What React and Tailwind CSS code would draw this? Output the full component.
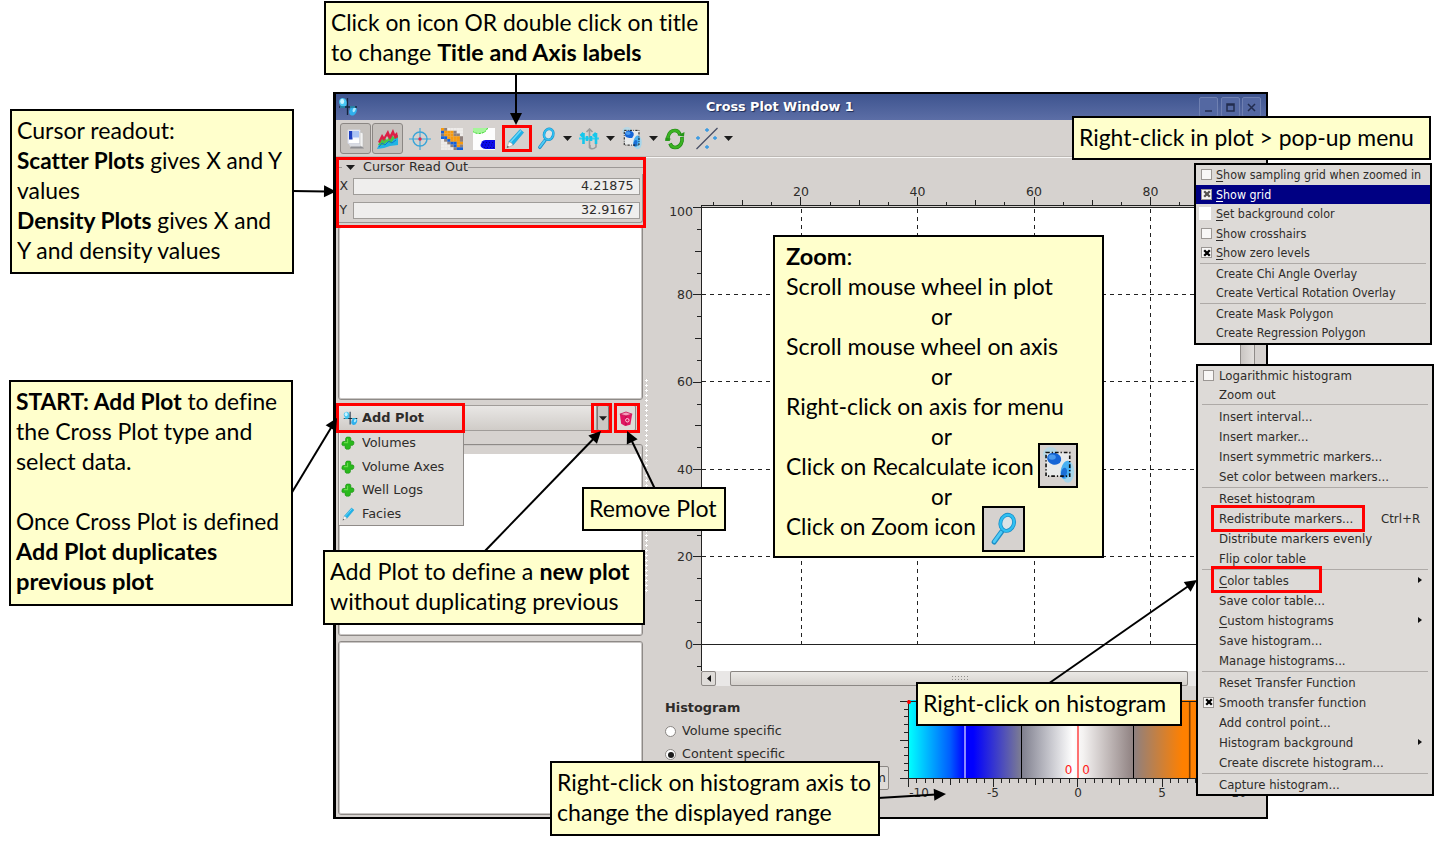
import React, { useLayoutEffect, useRef } from "react";

const UI = "font-['DejaVu_Sans',sans-serif] text-[#2e2c2a]";

/* Text stretched or squeezed horizontally to a fixed advance width. */
function Fit({ w, children, className = "" }) {
  const ref = useRef(null);
  useLayoutEffect(() => {
    const el = ref.current;
    if (el && w) el.style.transform = `scaleX(${w / el.offsetWidth})`;
  }, [w]);
  return (
    <span className="inline-block" style={{ width: w }}>
      <span ref={ref} className={`inline-block origin-left whitespace-nowrap ${className}`}>
        {children}
      </span>
    </span>
  );
}

function Callout({ className, lines, children }) {
  return (
    <div
      className={`absolute border-2 border-black bg-[#ffffcc] pt-[5px] pl-[5px] font-['Lato',sans-serif] text-[22.5px] leading-[30px] text-black [font-variant-ligatures:none] ${className}`}
    >
      {lines.map(([w, content, extra], i) => (
        <div key={i} className={`h-[30px] ${extra || ""}`}>
          {w ? <Fit w={w}>{content}</Fit> : null}
        </div>
      ))}
      {children}
    </div>
  );
}

function LogoIcon({ className }) {
  return (
    <svg viewBox="0 0 20 20" className={className}>
      <ellipse cx="5" cy="5.5" rx="3.8" ry="4.6" transform="rotate(-20 5 5.5)" fill="#46c6f2" />
      <ellipse cx="4.2" cy="4.4" rx="2" ry="2.6" fill="#c9f3ff" />
      <ellipse cx="15" cy="14" rx="3.6" ry="4.8" transform="rotate(25 15 14)" fill="#2fb0ec" />
      <ellipse cx="16.2" cy="12.6" rx="1.4" ry="2.6" transform="rotate(25 16 12.6)" fill="#aeeafd" />
      <path d="M9.5 1v17M1 10h18" stroke="#14263c" strokeWidth="1.3" />
      <path d="M2 10h5M12 10h5" stroke="#31c8ef" strokeWidth="1.1" />
    </svg>
  );
}

function PencilIcon({ className }) {
  return (
    <svg viewBox="0 0 20 22" className={className}>
      <path d="M3 14.5 14.8 1.5 18.6 4.6 7.4 18z" fill="#1fb2e8" stroke="#1a9fd2" strokeWidth=".6" />
      <path d="M4.4 15.2 15.8 2.6" stroke="#6fd8f8" strokeWidth="1.4" />
      <path d="M3 14.5 1 20.8 7.4 18 6 15.8z" fill="#fafafa" stroke="#999" strokeWidth=".6" />
      <path d="m1 20.8.7-2.2 1.5 1.3z" fill="#444" />
    </svg>
  );
}

function MagnifierIcon({ className }) {
  return (
    <svg viewBox="0 0 20 24" className={className}>
      <path d="M8.3 14 3 21.3" stroke="#1b8fc8" strokeWidth="3.6" strokeLinecap="round" />
      <path d="M8.1 14 3 21" stroke="#4fcbf6" strokeWidth="2" strokeLinecap="round" />
      <ellipse cx="12.3" cy="7.6" rx="4.8" ry="5.8" transform="rotate(18 12.3 7.6)" fill="#dbe3e6" stroke="#1b8fc8" strokeWidth="2.8" />
      <ellipse cx="12.3" cy="7.6" rx="4.8" ry="5.8" transform="rotate(18 12.3 7.6)" fill="none" stroke="#2fc0f2" strokeWidth="1.7" />
    </svg>
  );
}

function ZoomAreaIcon({ className }) {
  return (
    <svg viewBox="0 0 26 30" className={className}>
      <ellipse cx="6.5" cy="5.5" rx="6" ry="5.5" fill="#9fdcf8" opacity=".55" />
      <ellipse cx="20.5" cy="20" rx="5.2" ry="9" fill="#8ed6f7" opacity=".7" />
      <rect x="3" y="4.5" width="19" height="19" fill="#eef1f3" opacity=".75" />
      <ellipse cx="9.5" cy="9.5" rx="5.8" ry="4.8" transform="rotate(15 9.5 9.5)" fill="#1565d6" />
      <ellipse cx="7.8" cy="8.2" rx="3" ry="2.2" fill="#4b9bee" />
      <ellipse cx="19" cy="18.5" rx="4" ry="7.6" transform="rotate(14 19 18.5)" fill="#49b0f1" />
      <ellipse cx="17.4" cy="21" rx="2.4" ry="4.2" transform="rotate(14 17.4 21)" fill="#1a6fd6" />
      <rect x="2.9" y="4.4" width="19.200" height="19.200" fill="none" stroke="#111" strokeWidth="1.3" strokeDasharray="3 1.6 1 1.6" />
    </svg>
  );
}

function CloverIcon({ className }) {
  return (
    <svg viewBox="0 0 16 16" className={className}>
      <path
        d="M6.500 1.200h3.600q1.600.4 1.200 4.400 3.200-.3 3.500 1.200l-.2 2.600q-.4 1.600-3.800 1.400.4 3.800-1.400 4.200H6q-2-.4-1.200-3.800-3.400.4-3.800-1.200l.2-2.600q.4-1.600 4-1.200-.4-4.400 1.300-5z"
        fill="#29b91c"
        stroke="#1a8f12"
        strokeWidth=".7"
      />
      <path d="M7.500 3v4.600H3.500" stroke="#66da4a" strokeWidth="1.300" fill="none" />
    </svg>
  );
}

function Caret({ cell }) {
  return (
    <span className={`flex items-center justify-center ${cell}`}>
      <svg viewBox="0 0 9 5" className="h-[5px] w-[9px]">
        <path d="M0 0h9L4.5 5z" fill="#1c1c1c" />
      </svg>
    </span>
  );
}

function Cell({ cell, children }) {
  return <span className={`flex h-[31px] shrink-0 items-center justify-center ${cell}`}>{children}</span>;
}

const mosaic = [
  "ogw....",
  "booog..",
  "gooogg.",
  "bboooog",
  ".gbooog",
  "..gbboo",
  "...gbog",
  "....gbb",
];
const mosaicFill = { o: "#f79a0e", g: "#8d7f7b", b: "#1560d8", w: "#eeeeee", ".": "#eeecea" };

function Toolbar() {
  return (
    <div className="flex h-[38px] shrink-0 items-center border-b border-[#f7f6f5] pl-[4px] shadow-[0_-1px_0_#bdb9b5_inset]">
      <Cell cell="w-[31px] rounded-[3px] border border-[#8b8784] bg-[#c5c1bd]">
        <svg viewBox="0 0 22 24" className="h-[24px] w-[22px]">
          <path d="M6 19h11l2 2.500H5z" fill="#8e8e92" />
          <path d="M3 3h12v13.500H3z" fill="#f5f7fc" stroke="#d5d8e2" />
          <path d="M4 4h3.500v9H4z" fill="#1d3fc0" />
          <path d="M7.500 4H14v6.500H7.500z" fill="#a9c3f5" />
          <path d="M4 12.500h10V16H4z" fill="#fff" />
          <path d="m15 5 3 1v14l-3-1z" fill="#f2f2f2" stroke="#b9b9bb" strokeWidth=".6" />
          <path d="M4 17h11v2.500H5z" fill="#d9dbe2" />
        </svg>
      </Cell>
      <Cell cell="ml-px w-[31px] rounded-[3px] border border-[#8b8784] bg-[#c5c1bd]">
        <svg viewBox="0 0 24 24" className="h-[24px] w-[24px]">
          <path d="m1 22 3-7 4-3 3 2 4-5 3 2 4-3v10l-8 1-6 2z" fill="#20b4e4" />
          <path d="m2 18 3-6 3-2 3 3 4-6 3 3 4-2v3l-4 1-3 4-4-1-4 3z" fill="#46c54a" />
          <path d="m2 15 4-8 2 3 4-7 2 5 3-6 2 5 2-2 1 5-3 2-2-4-3 5-3-4-3 5-2-2-2 4z" fill="#dc1f45" />
          <path d="m3 20 3-4 3 2 4-4 3 2 4-3" stroke="#1274c9" fill="none" strokeWidth="1" />
        </svg>
      </Cell>
      <Cell cell="w-[33px]">
        <svg viewBox="0 0 22 22" className="h-[22px] w-[22px]" fill="none">
          <circle cx="11" cy="11" r="7" stroke="#3aa5d8" strokeWidth="1.4" />
          <path d="M11 0v22M0 11h22" stroke="#3aa5d8" strokeWidth="1.1" />
          <circle cx="11" cy="11" r="1.7" fill="#e0234e" />
        </svg>
      </Cell>
      <Cell cell="w-[32px]">
        <svg viewBox="0 0 22 22" className="h-[22px] w-[22px]">
          {mosaic.map((row, r) =>
            [...row].map((c, i) => (
              <rect key={`${r}-${i}`} x={i * 3.15} y={r * 2.76} width="3.2" height="2.8" fill={mosaicFill[c]} />
            ))
          )}
        </svg>
      </Cell>
      <Cell cell="w-[31px]">
        <svg viewBox="0 0 22 22" className="h-[22px] w-[22px]">
          <path d="M0 0h22v22H0z" fill="#fdfdfd" />
          <path d="M0 0h14.500Q13 5.500 6 5.500 1.500 5.500 0 3.500z" fill="#a5f59a" />
          <path d="M0 3.500Q2 5.500 6 5.500 13 5 14.500 0" stroke="#35d42a" fill="none" strokeDasharray="2 1" />
          <path d="M9 13.500q1-1.500 3.500-1.500H22v9h-9.500Q7.500 20 7.500 17z" fill="#0b0bea" />
          <path d="M10 14.500h11M9 17h12M11 19.500h10" stroke="#05058a" strokeWidth="1" strokeDasharray="1 2" />
        </svg>
      </Cell>
      <Cell cell="w-[33px]">
        <PencilIcon className="h-[21px] w-[19px]" />
      </Cell>
      <Cell cell="w-[29px]">
        <MagnifierIcon className="h-[23px] w-[19px]" />
      </Cell>
      <Caret cell="w-[12px]" />
      <Cell cell="w-[31px]">
        <svg viewBox="0 0 22 22" className="h-[22px] w-[22px]" fill="none">
          <path d="M11.500 1v19M8.500 4l3-3 3 3M12 17v3q3 2 6-1v-4" stroke="#9a9c9d" strokeWidth="1.600" />
          <path d="M1 10.500h20" stroke="#35d0f0" strokeWidth="2" />
          <path d="M5.500 5v11M2.500 8 5.500 5M18 5v11M15 8l3-3M9 8v5M13 8v5" stroke="#16c7ec" strokeWidth="2.600" />
        </svg>
      </Cell>
      <Caret cell="w-[12px]" />
      <Cell cell="w-[31px]">
        <ZoomAreaIcon className="h-[23px] w-[20px]" />
      </Cell>
      <Caret cell="w-[12px]" />
      <Cell cell="w-[32px]">
        <svg viewBox="0 0 20 22" className="h-[22px] w-[20px]" fill="none">
          <path d="M3 13V9Q4.500 2.500 10 2.500q3.500 0 5 4M17 9v4Q15.500 19.500 10 19.500q-3.500 0-5-4" stroke="#1f8714" strokeWidth="3.600" />
          <path d="M3 12.500V9Q4.500 2.500 10 2.500q3.500 0 4.500 3.500M17 9.500V13Q15.500 19.500 10 19.500q-3.500 0-4.500-3.500" stroke="#3bb322" strokeWidth="2.300" />
          <path d="m12.500 7.500 6.500 1 .500-4.500M0 13l.500-3.500 6 1.500z" fill="#249617" />
        </svg>
      </Cell>
      <Cell cell="w-[31px]">
        <svg viewBox="0 0 24 24" className="h-[24px] w-[24px]" fill="none">
          <path d="M1.500 22 22.500 1" stroke="#444b63" strokeWidth="1.200" />
          <path d="M12 1v4M10 3h4M3 9v4M1 11h4M20 9v4M18 11h4M12 18v4M10 20h4" stroke="#3197e4" strokeWidth="1.300" />
        </svg>
      </Cell>
      <Caret cell="w-[12px]" />
    </div>
  );
}

function TitleBar() {
  const button =
    "flex h-[20px] w-[19px] items-end justify-center rounded-[2px] border border-[#6f80b1] bg-[#5468a2]";
  return (
    <div className="flex h-[26px] shrink-0 items-center bg-gradient-to-b from-[#3e548f] to-[#5c6ea6]">
      <LogoIcon className="ml-[2px] h-[20px] w-[20px]" />
      <div className={`${UI} flex-1 pl-[347.500px] text-[12.5px] font-bold text-white [text-shadow:1px_1px_1px_#1d2b55]`}>
        <Fit w={148} className="text-white">Cross Plot Window 1</Fit>
      </div>
      <div className="flex gap-[2.500px] pr-[5px]">
        {["M5 13h7", "M5 6h7v7H5zM5 7h7", "m5 6 7 7M12 6l-7 7"].map((d) => (
          <span key={d} className={button}>
            <svg viewBox="0 0 17 18" className="h-[18px] w-[17px]" fill="none" stroke="#222c4e" strokeWidth="1.500">
              <path d={d} />
            </svg>
          </span>
        ))}
      </div>
    </div>
  );
}

function ReadoutRow({ label, value, w }) {
  return (
    <div className="flex h-[24px] items-center">
      <span className="w-[15px] pl-[1.500px] text-[12.5px]">{label}</span>
      <span className="flex h-[17px] w-[287px] items-center justify-end border border-[#9f9c99] bg-[#efeeed] pr-[5px] text-[12px]">
        <Fit w={w}>{value}</Fit>
      </span>
    </div>
  );
}

function LeftColumn() {
  const dock =
    "w-[305px] shrink-0 rounded-[3px] border border-[#8e8a87] bg-white shadow-[inset_0_0_0_1px_#c9c6c4]";
  return (
    <div className={`${UI} flex w-[309px] shrink-0 flex-col pl-[2px]`}>
      <div className="flex h-[16px] shrink-0 items-center pt-[2px]">
        <span className="h-px w-[4px] bg-[#9c9896]" />
        <svg viewBox="0 0 9 5" className="mx-[4px] h-[5px] w-[9px]">
          <path d="M0 0h9L4.500 5z" fill="#1c1c1c" />
        </svg>
        <span className="pl-[4px] text-[12px] leading-none">
          <Fit w={105}>Cursor Read Out</Fit>
        </span>
        <span className="h-px flex-1 bg-[#9c9896]" />
      </div>
      <div className="h-[49px] w-[305px] shrink-0 rounded-br-[3px] border-r border-b border-[#999593]">
        <ReadoutRow label="X" value="4.21875" w={53} />
        <ReadoutRow label="Y" value="32.9167" w={53} />
      </div>
      <div className={`${dock} mt-[3px] h-[174px]`} />
      <div className="mt-[5px] flex h-[26px] shrink-0">
        <div className="flex w-[259px] items-center border border-[#a09c99] bg-gradient-to-b from-[#e9e7e5] to-[#d0ccc8] pl-[4px]">
          <LogoIcon className="h-[15px] w-[15px]" />
          <span className="pl-[4px] text-[12.5px] font-bold">
            <Fit w={62}>Add Plot</Fit>
          </span>
        </div>
        <div className="flex w-[12px] items-center justify-center rounded-[2px] border border-[#7f7b78] bg-[#cbc7c4]">
          <Caret cell="w-[8px]" />
        </div>
        <div className="ml-[6px] flex w-[21px] items-center justify-center rounded-[2px] border border-[#8b8784] bg-[#dedbd8]">
          <svg viewBox="0 0 16 18" className="h-[17px] w-[14px]">
            <path d="M1 4 8 1.500 15 4l-2 12-6 1.500L2.500 15z" fill="#df1560" />
            <path d="M1 4 8 6l7-2-7-2.500z" fill="#f79cbb" stroke="#c20a4c" strokeWidth=".8" />
            <path d="M8 6v11" stroke="#b90748" />
            <circle cx="9.500" cy="11" r="2" fill="none" stroke="#ffd2e2" strokeWidth="1.100" />
          </svg>
        </div>
      </div>
      <div className={`${dock} mt-[13px] h-[192px] p-px`}>
        <div className="h-[8px] bg-[#d6d2cf]" />
      </div>
      <div className={`${dock} mt-[5px] h-[174px]`} />
    </div>
  );
}

const xTicks = Array.from({ length: 19 }, (_, i) => i);
const yTicks = Array.from({ length: 22 }, (_, i) => i);

function PlotArea() {
  return (
    <svg viewBox="649 158 591 513" className="block h-[513px] w-[591px] shrink-0">
      <rect x="701" y="208" width="539" height="463" fill="#fff" />
      <g stroke="#222" shapeRendering="crispEdges">
        <path d="M693 207.500H1240M701 205.500H1240M701.500 205V671M701 644.500H1240" />
        <path
          d="M801.500 209V644M917.500 209V644M1034.500 209V644M1150.500 209V644M702 294.500H1240M702 381.500H1240M702 469.500H1240M702 556.500H1240"
          strokeDasharray="4 4"
        />
        {xTicks.map((i) => {
          const x = 713.6 + i * 29.13;
          const top = i % 4 === 3 ? 197 : i % 2 === 1 ? 200 : 202;
          return <path key={i} d={`M${x} ${top}V206`} />;
        })}
        {yTicks.map((i) => {
          const y = 207.500 + i * 21.84;
          const left = i % 4 === 0 ? 693 : i % 2 === 0 ? 695 : 697;
          return <path key={i} d={`M${left} ${y}H701`} />;
        })}
      </g>
      <g fontFamily="DejaVu Sans, sans-serif" fontSize="12.5" fill="#2e2c2a">
        <g textAnchor="middle">
          <text x="801" y="196">20</text>
          <text x="917.500" y="196">40</text>
          <text x="1034" y="196">60</text>
          <text x="1150.500" y="196">80</text>
        </g>
        <g textAnchor="end">
          <text x="693" y="216">100</text>
          <text x="693" y="299">80</text>
          <text x="693" y="386">60</text>
          <text x="693" y="473.500">40</text>
          <text x="693" y="561">20</text>
          <text x="693" y="648.500">0</text>
        </g>
      </g>
    </svg>
  );
}

function Histogram() {
  return (
    <svg viewBox="898 693 368 123" className="block h-[123px] w-[368px] shrink-0">
      <defs>
        <linearGradient id="spectrum">
          <stop offset="0" stopColor="#00ffff" />
          <stop offset=".12" stopColor="#0060ff" />
          <stop offset=".165" stopColor="#0000ff" />
          <stop offset=".19" stopColor="#0000ff" />
          <stop offset=".335" stopColor="#80808f" />
          <stop offset=".485" stopColor="#ffffff" />
          <stop offset=".515" stopColor="#f4f2f1" />
          <stop offset=".665" stopColor="#8e8080" />
          <stop offset=".81" stopColor="#ff8000" />
          <stop offset="1" stopColor="#ff8000" />
        </linearGradient>
      </defs>
      <rect x="909" y="700" width="338" height="79" fill="url(#spectrum)" />
      <g stroke="#222" shapeRendering="crispEdges">
        <path d="M908.500 700V787M900 778.500H1247M900 701.500H1247M900 740.500H908" />
        <path d="M1021.500 701V778M1133.500 701V778" stroke="#000" />
        {[1, 2, 3, 4, 6, 7, 8, 9].map((i) => (
          <path key={i} d={`M904 ${701.500 + i * 7.7}H908`} />
        ))}
        {Array.from({ length: 40 }, (_, i) => (
          <path key={i} d={`M${908.500 + i * 8.45} 779V${i % 10 === 0 ? 787 : i % 5 === 0 ? 785 : 783}`} />
        ))}
      </g>
      <path d="M965 702V778" stroke="#b9b9ff" strokeWidth="1.500" />
      <path d="M1078 702V778" stroke="#ff5050" strokeWidth="1.600" />
      <path d="M1189.700 702V778" stroke="#7b3c00" strokeWidth="1.600" />
      <circle cx="909" cy="702" r="2" fill="#f00" />
      <g fontFamily="DejaVu Sans, sans-serif" fontSize="12" fill="#2e2c2a" textAnchor="middle">
        <text x="919" y="797">-10</text>
        <text x="993" y="797">-5</text>
        <text x="1078" y="797">0</text>
        <text x="1162" y="797">5</text>
        <text x="1239" y="797">10</text>
        <text x="1068.500" y="774" fill="#ff1a1a">0</text>
        <text x="1086" y="774" fill="#ff1a1a">0</text>
      </g>
    </svg>
  );
}

function Radio({ checked, label, w }) {
  return (
    <div className="flex h-[23px] items-center">
      <span className="flex h-[11px] w-[11px] items-center justify-center rounded-full border border-[#8a8683] bg-white">
        {checked && <span className="h-[6px] w-[6px] rounded-full bg-[#1c1c1c]" />}
      </span>
      <span className="pl-[6px] text-[12.5px]">
        <Fit w={w}>{label}</Fit>
      </span>
    </div>
  );
}

function RightColumn() {
  return (
    <div className="flex flex-1 flex-col">
      <div className="flex shrink-0">
        <div className="flex w-[4px] flex-col pt-[220px]">
          <div className="h-[216px] w-[3px] bg-[radial-gradient(circle,#ffffff_1px,#b9b5b2_1.200px,transparent_1.500px)] bg-[length:3px_5px]" />
        </div>
        <PlotArea />
        <div className="mt-[50px] w-[15px] border-x border-[#8f8b88] bg-gradient-to-r from-[#c9c5c2] to-[#e3e0dd]" />
      </div>
      <div className="flex h-[15px] shrink-0 pl-[56px]">
        <div className="flex w-[15px] items-center justify-center rounded-[2px] border border-[#8b8784] bg-[#dfdcd9]">
          <svg viewBox="0 0 4 7" className="h-[7px] w-[4px]">
            <path d="M4 0v7L0 3.500z" fill="#111" />
          </svg>
        </div>
        <div className="w-[14px] bg-[#e9e7e6]" />
        <div className="flex w-[458px] items-center justify-center rounded-[2px] border border-[#8b8784] bg-gradient-to-b from-[#ebe9e6] to-[#d5d1cd]">
          <span className="h-[8px] w-[17px] bg-[radial-gradient(circle,#918d8a_0.800px,transparent_1px)] bg-[length:3px_3px]" />
        </div>
        <div className="w-[50px] bg-[#e9e7e6]" />
      </div>
      <div className="flex pt-[7px]">
        <div className={`${UI} flex w-[253px] flex-col pl-[20px]`}>
          <div className="flex h-[27px] items-center pt-[3px] text-[12.5px] font-bold">
            <Fit w={75}>Histogram</Fit>
          </div>
          <Radio label="Volume specific" w={100} />
          <Radio checked label="Content specific" w={103} />
          <div className="flex h-[24px] w-[224px] items-center justify-end rounded-[2px] border border-[#8b8784] bg-[#dedbd8] pr-[2px] text-[12.5px]">
            m
          </div>
        </div>
        <Histogram />
      </div>
    </div>
  );
}

function CheckMark({ state }) {
  if (state === undefined) return null;
  if (state === "swatch") return <span className="-ml-[2px] h-[13px] w-[12px] bg-white" />;
  return (
    <span className="flex h-[11px] w-[11px] items-center justify-center border border-[#9b9794] bg-[#f8f7f6]">
      {state !== "off" && (
        <svg
          viewBox="0 0 8 8"
          className={`h-[8px] w-[8px] ${state === "dim" ? "text-[#55534f]" : "text-black"}`}
        >
          <path d="m1.200 1.200 5.600 5.600M6.800 1.200 1.200 6.800" stroke="currentColor" strokeWidth="2.300" />
        </svg>
      )}
    </span>
  );
}

function PopupMenu({ items, row, sep, gutter, label, className }) {
  return (
    <div
      className={`${UI} absolute flex flex-col overflow-hidden border-2 border-black bg-[#dddad7] text-[11.5px] leading-none ${className}`}
    >
      {items.map((it, i) =>
        it === "-" ? (
          <div key={i} className={`mx-[4px] flex shrink-0 items-center ${sep}`}>
            <span className="h-px flex-1 bg-[#aeaaa7]" />
          </div>
        ) : (
          <div
            key={i}
            className={`flex shrink-0 items-center ${row} ${it.active ? "bg-[#000083] text-white" : ""}`}
          >
            <span className={`flex shrink-0 items-center pl-[5px] ${gutter}`}>
              <CheckMark state={it.check} />
            </span>
            <span className={label}>
              <Fit w={it.w}>
                {it.key ? (
                  <>
                    <span className="underline underline-offset-2">{it.t[0]}</span>
                    {it.t.slice(1)}
                  </>
                ) : (
                  it.t
                )}
              </Fit>
            </span>
            {it.shortcut && (
              <span className={`ml-auto pr-[12.500px] ${label}`}>
                <Fit w={39}>{it.shortcut}</Fit>
              </span>
            )}
            {it.sub && (
              <svg viewBox="0 0 4 6" className="mr-[10px] ml-auto h-[6px] w-[4px]">
                <path d="M0 0v6l4-3z" fill="#111" />
              </svg>
            )}
          </div>
        )
      )}
    </div>
  );
}

const plotMenu = [
  { t: "Show sampling grid when zoomed in", w: 205.5, key: true, check: "off" },
  { t: "Show grid", w: 55, key: true, check: "dim", active: true },
  { t: "Set background color", w: 119, key: true, check: "swatch" },
  { t: "Show crosshairs", w: 90.5, key: true, check: "off" },
  { t: "Show zero levels", w: 93.5, key: true, check: "on" },
  "-",
  { t: "Create Chi Angle Overlay", w: 141 },
  { t: "Create Vertical Rotation Overlay", w: 179.5 },
  "-",
  { t: "Create Mask Polygon", w: 117 },
  { t: "Create Regression Polygon", w: 150 },
];

const histogramMenu = [
  { t: "Logarithmic histogram", w: 133, check: "off" },
  { t: "Zoom out", w: 57 },
  "-",
  { t: "Insert interval...", w: 93 },
  { t: "Insert marker...", w: 90 },
  { t: "Insert symmetric markers...", w: 163 },
  { t: "Set color between markers...", w: 170 },
  "-",
  { t: "Reset histogram", w: 96 },
  { t: "Redistribute markers...", w: 134, shortcut: "Ctrl+R" },
  { t: "Distribute markers evenly", w: 153 },
  { t: "Flip color table", w: 87 },
  "-",
  { t: "Color tables", w: 70, key: true, sub: true },
  { t: "Save color table...", w: 106 },
  { t: "Custom histograms", w: 114.5, key: true, sub: true },
  { t: "Save histogram...", w: 103 },
  { t: "Manage histograms...", w: 127 },
  "-",
  { t: "Reset Transfer Function", w: 137 },
  { t: "Smooth transfer function", w: 147, check: "on" },
  { t: "Add control point...", w: 112 },
  { t: "Histogram background", w: 134, sub: true },
  { t: "Create discrete histogram...", w: 165 },
  "-",
  { t: "Capture histogram...", w: 121 },
];

const addPlotMenu = [
  ["Volumes", 54],
  ["Volume Axes", 82],
  ["Well Logs", 61],
  ["Facies", 39],
];

function Arrow({ x1, y1, x2, y2 }) {
  const len = Math.hypot(x2 - x1, y2 - y1);
  const angle = (Math.atan2(y2 - y1, x2 - x1) * 180) / Math.PI;
  return (
    <g transform={`translate(${x1} ${y1}) rotate(${angle})`}>
      <path d={`M0 0H${len - 10}`} stroke="#000" strokeWidth="2" />
      <path d={`M${len} 0l-12-6v12z`} fill="#000" />
    </g>
  );
}

function Highlight({ className }) {
  return <div className={`absolute border-[3px] border-[#f00] ${className}`} />;
}

export default function App() {
  return (
    <div className="relative h-[844px] w-[1434px] overflow-hidden bg-white">
      <div className="absolute top-[92px] left-[333px] flex h-[727px] w-[935px] flex-col border-2 border-l-[3px] border-black bg-[#d6d2cf]">
        <TitleBar />
        <Toolbar />
        <div className="flex min-h-0 flex-1 overflow-hidden">
          <LeftColumn />
          <RightColumn />
        </div>
      </div>

      <div
        className={`${UI} absolute top-[430px] left-[338px] flex h-[96px] w-[126px] flex-col border border-[#8f8b88] bg-[#dddad7] text-[12.5px] shadow-[inset_1px_1px_0_#f0efed]`}
      >
        {addPlotMenu.map(([label, w], i) => (
          <div key={label} className="flex h-[23.700px] shrink-0 items-center pl-[2px]">
            {i === 3 ? (
              <PencilIcon className="ml-[1px] h-[14px] w-[13px]" />
            ) : (
              <CloverIcon className="h-[14px] w-[14px]" />
            )}
            <span className="ml-auto w-[101.500px] pt-[1px] leading-none">
              <Fit w={w}>{label}</Fit>
            </span>
          </div>
        ))}
      </div>

      <PopupMenu
        items={plotMenu}
        row="h-[19.500px]"
        sep="h-[1px]"
        gutter="w-[20px]"
        label="pt-[2px]"
        className="top-[163px] left-[1194px] h-[182px] w-[238px]"
      />
      <PopupMenu
        items={histogramMenu}
        row="h-[20.100px] first:h-[18px]"
        sep="h-[1.700px]"
        gutter="w-[20.500px]"
        label="pt-[3px]"
        className="top-[364px] left-[1196px] h-[432px] w-[238px]"
      />

      <Highlight className="top-[157px] left-[336px] h-[71px] w-[310px]" />
      <Highlight className="top-[125px] left-[502px] h-[27px] w-[30px]" />
      <Highlight className="top-[403px] left-[336px] h-[30px] w-[129px]" />
      <Highlight className="top-[403px] left-[591px] h-[30px] w-[21px]" />
      <Highlight className="top-[403px] left-[614px] h-[30px] w-[26px]" />
      <Highlight className="top-[505px] left-[1211px] h-[27px] w-[154px]" />
      <Highlight className="top-[566px] left-[1211px] h-[27px] w-[111px]" />

      <svg viewBox="0 0 1434 844" className="pointer-events-none absolute inset-0 h-[844px] w-[1434px]">
        <Arrow x1={516} y1={73} x2={516} y2={125} />
        <Arrow x1={292} y1={191} x2={336} y2={191.500} />
        <Arrow x1={291} y1={494} x2={337} y2={418} />
        <Arrow x1={484} y1={552} x2={601} y2={431} />
        <Arrow x1={655} y1={489} x2={627} y2={431} />
        <Arrow x1={1048} y1={684} x2={1197} y2={580} />
        <Arrow x1={878} y1={798} x2={946} y2={794} />
      </svg>

      <Callout
        className="top-[1px] left-[324px] h-[74px] w-[385px]"
        lines={[
          [367, "Click on icon OR double click on title"],
          [311, <>to change <b>Title and Axis labels</b></>],
        ]}
      />
      <Callout
        className="top-[109px] left-[10px] h-[165px] w-[284px]"
        lines={[
          [158, "Cursor readout:"],
          [265, <><b>Scatter Plots</b> gives X and Y</>],
          [63, "values"],
          [254, <><b>Density Plots</b> gives X and</>],
          [204, "Y and density values"],
        ]}
      />
      <Callout
        className="top-[380px] left-[9px] h-[226px] w-[284px]"
        lines={[
          [261, <><b>START: Add Plot</b> to define</>],
          [236, "the Cross Plot type and"],
          [116, "select data."],
          [0, ""],
          [263, "Once Cross Plot is defined"],
          [201, <b>Add Plot duplicates</b>],
          [138, <b>previous plot</b>],
        ]}
      />
      <Callout
        className="top-[550px] left-[323px] h-[75px] w-[322px]"
        lines={[
          [299, <>Add Plot to define a <b>new plot</b></>],
          [289, "without duplicating previous"],
        ]}
      />
      <Callout className="top-[487px] left-[582px] h-[44px] w-[144px]" lines={[[128, "Remove Plot"]]} />
      <Callout
        className="top-[116px] left-[1072px] h-[44px] w-[359px]"
        lines={[[335, "Right-click in plot > pop-up menu"]]}
      />
      <Callout
        className="top-[682px] left-[916px] h-[44px] w-[266px]"
        lines={[[243, "Right-click on histogram"]]}
      />
      <Callout
        className="top-[761px] left-[550px] h-[75px] w-[330px]"
        lines={[
          [314, "Right-click on histogram axis to"],
          [275, "change the displayed range"],
        ]}
      />
      <Callout
        className="top-[235px] left-[773px] h-[323px] w-[331px]"
        lines={[
          [66, <><b>Zoom</b>:</>, "pl-[6px]"],
          [267, "Scroll mouse wheel in plot", "pl-[6px]"],
          [21, "or", "pl-[151px]"],
          [272, "Scroll mouse wheel on axis", "pl-[6px]"],
          [21, "or", "pl-[151px]"],
          [278, "Right-click on axis for menu", "pl-[6px]"],
          [21, "or", "pl-[151px]"],
          [248, "Click on Recalculate icon", "pl-[6px]"],
          [21, "or", "pl-[151px]"],
          [190, "Click on Zoom icon", "pl-[6px]"],
        ]}
      >
        <div className="absolute top-[206px] left-[263px] flex h-[45px] w-[40px] items-center justify-center border-2 border-black bg-[#d6d2cf]">
          <ZoomAreaIcon className="h-[37px] w-[33px]" />
        </div>
        <div className="absolute top-[269px] left-[207px] flex h-[46px] w-[43px] items-center justify-center border-2 border-black bg-[#d6d2cf]">
          <MagnifierIcon className="h-[34px] w-[28px]" />
        </div>
      </Callout>
    </div>
  );
}
